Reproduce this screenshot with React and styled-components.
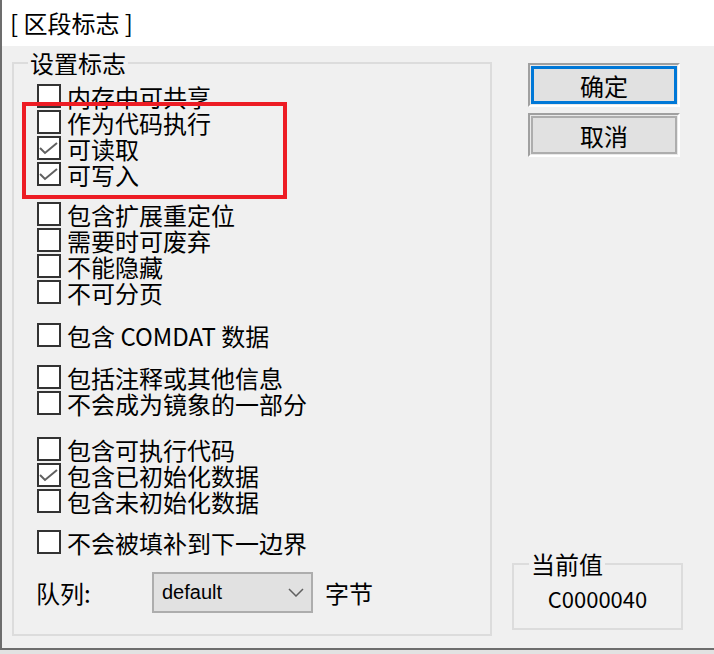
import React from 'react';
import styled, { createGlobalStyle } from 'styled-components';

const GlobalStyle = createGlobalStyle`
  html, body {
    margin: 0;
    padding: 0;
    background: #e2e2e2;
  }
  body {
    font-family: "Noto Sans CJK SC", "Noto Sans", sans-serif;
    color: #000;
  }
`;

const Window = styled.div`
  position: relative;
  width: 712px;
  height: 648px;
  border-left: 2px solid #6d6d6d;
  border-bottom: 2px solid #6d6d6d;
  background: #f0f0f0;
  display: flex;
  flex-direction: column;
`;

const TitleBar = styled.div`
  height: 46px;
  flex-shrink: 0;
  background: #fff;
  padding-left: 8px;
  display: flex;
  align-items: center;
  font-size: 24px;
  line-height: 26px;
`;

const Body = styled.div`
  flex: 1;
  display: flex;
  padding: 4px 0 0 10px;
`;

const GroupBox = styled.fieldset`
  box-sizing: border-box;
  margin: 0;
  width: ${p => p.$w}px;
  height: ${p => p.$h}px;
  padding: 0 ${p => p.$pr || 0}px 0 ${p => p.$pl}px;
  border: 2px solid #dcdcdc;
  min-width: 0;
`;

const Legend = styled.legend`
  padding: 0 2px;
  font-size: 24px;
  line-height: 26px;
`;

const Section = styled.div`
  margin: ${p => p.$gap}px 0 0 9px;
  display: flex;
  flex-direction: column;
`;

const Row = styled.div`
  display: flex;
  align-items: flex-start;
  gap: 6px;
  height: 26px;
  font-size: 24px;
  line-height: 25px;
  white-space: nowrap;
`;

const Box = styled.span`
  box-sizing: border-box;
  width: 24px;
  height: 24px;
  flex-shrink: 0;
  border: 2px solid #333;
  background: #fff;
  display: flex;
`;

const AlignRow = styled.div`
  margin: 16px 0 0 8px;
  display: flex;
  align-items: center;
  height: 41px;
  font-size: 24px;
`;

const Label = styled.span`
  width: 116px;
`;

const Combo = styled.div`
  box-sizing: border-box;
  width: 161px;
  height: 41px;
  border: 2px solid #adadad;
  background: #e1e1e1;
  display: flex;
  align-items: center;
  justify-content: space-between;
  padding: 0 7px 0 8px;
  font-family: "Liberation Sans", Arial, sans-serif;
  font-size: 20px;
`;

const Unit = styled.span`
  margin-left: 12px;
`;

const SideColumn = styled.div`
  margin-left: 20px;
  width: 171px;
  display: flex;
  flex-direction: column;
  padding-bottom: 18px;
`;

const Button = styled.button`
  box-sizing: border-box;
  width: 152px;
  height: 44px;
  margin: ${p => p.$top}px 0 0 16px;
  padding: 0;
  border: 2px solid;
  border-color: #a0a0a0 #ffffff #ffffff #a0a0a0;
  background: #e1e1e1;
  box-shadow: inset 0 0 0 1px #e9e9e9,
    inset 0 0 0 ${p => (p.$primary ? '4px #0078d7' : '3px #adadad')};
  font-family: "Noto Sans CJK SC", sans-serif;
  font-size: 24px;
  color: #000;
`;

const ValueGroup = styled(GroupBox)`
  margin-top: auto;
`;

const Value = styled.div`
  margin-top: 8px;
  text-align: center;
  font-size: 22px;
  line-height: 26px;
`;

const Annotation = styled.div`
  position: absolute;
  left: 20px;
  top: 102px;
  width: 265px;
  height: 97px;
  box-sizing: border-box;
  border: 4px solid #ed1c24;
  pointer-events: none;
`;

const Check = () => (
  <svg width="20" height="20" viewBox="0 0 20 20">
    <polyline points="1,10 6,15 18,5" fill="none" stroke="#606060" strokeWidth="2" />
  </svg>
);

const Chevron = () => (
  <svg width="16" height="9" viewBox="0 0 16 9">
    <polyline points="1,1 8,8 15,1" fill="none" stroke="#606060" strokeWidth="1.5" />
  </svg>
);

const sections = [
  { gap: 8, items: [['内存中可共享'], ['作为代码执行'], ['可读取', true], ['可写入', true]] },
  { gap: 14, items: [['包含扩展重定位'], ['需要时可废弃'], ['不能隐藏'], ['不可分页']] },
  { gap: 17, items: [['包含 COMDAT 数据']] },
  { gap: 16, items: [['包括注释或其他信息'], ['不会成为镜象的一部分']] },
  { gap: 20, items: [['包含可执行代码'], ['包含已初始化数据', true], ['包含未初始化数据']] },
  { gap: 15, items: [['不会被填补到下一边界']] },
];

export default function App() {
  return (
    <>
      <GlobalStyle />
      <Window>
        <TitleBar>[ 区段标志 ]</TitleBar>
        <Body>
          <GroupBox $w={480} $h={586} $pl={14}>
            <Legend>设置标志</Legend>
            {sections.map((s, i) => (
              <Section key={i} $gap={s.gap}>
                {s.items.map(([text, checked]) => (
                  <Row key={text}>
                    <Box>{checked && <Check />}</Box>
                    {text}
                  </Row>
                ))}
              </Section>
            ))}
            <AlignRow>
              <Label>队列:</Label>
              <Combo>
                default
                <Chevron />
              </Combo>
              <Unit>字节</Unit>
            </AlignRow>
          </GroupBox>
          <SideColumn>
            <Button $top={13} $primary>确定</Button>
            <Button $top={6}>取消</Button>
            <ValueGroup $w={171} $h={79} $pl={15} $pr={15}>
              <Legend>当前值</Legend>
              <Value>C0000040</Value>
            </ValueGroup>
          </SideColumn>
        </Body>
        <Annotation />
      </Window>
    </>
  );
}
